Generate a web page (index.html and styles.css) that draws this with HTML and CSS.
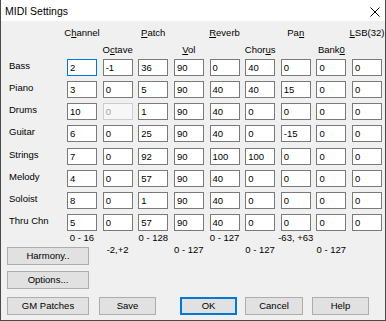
FILE: index.html
```html
<!DOCTYPE html>
<html>
<head>
<meta charset="utf-8">
<link rel="stylesheet" href="styles.css">
</head>
<body>
<div class="dialog">
  <div class="titlebar">
    <span class="title">MIDI Settings</span>
    <svg class="close" width="10" height="10" viewBox="0 0 10 10"><path d="M0.5 0.5 L9.5 9.5 M9.5 0.5 L0.5 9.5" stroke="#000" stroke-width="1" fill="none"/></svg>
  </div>
  <div class="content">
    <div class="grid hdr">
      <span class="c c2"><span>C<u>h</u>annel</span></span>
      <span class="c c4"><span><u>P</u>atch</span></span>
      <span class="c c6"><span><u>R</u>everb</span></span>
      <span class="c c8"><span>Pa<u>n</u></span></span>
      <span class="c c10"><span><u>L</u>SB(32)</span></span>
    </div>
    <div class="grid hdr hdr2">
      <span class="c c3"><span>O<u>c</u>tave</span></span>
      <span class="c c5"><span><u>V</u>ol</span></span>
      <span class="c c7"><span>Chor<u>u</u>s</span></span>
      <span class="c c9"><span>Bank<u>0</u></span></span>
    </div>
    <div class="grid rows">
      <span class="lbl">Bass</span><span class="box focus">2</span><span class="box">-1</span><span class="box">36</span><span class="box">90</span><span class="box">0</span><span class="box">40</span><span class="box">0</span><span class="box">0</span><span class="box">0</span>
      <span class="lbl">Piano</span><span class="box">3</span><span class="box">0</span><span class="box">5</span><span class="box">90</span><span class="box">40</span><span class="box">40</span><span class="box">15</span><span class="box">0</span><span class="box">0</span>
      <span class="lbl">Drums</span><span class="box">10</span><span class="box disabled">0</span><span class="box">1</span><span class="box">90</span><span class="box">40</span><span class="box">0</span><span class="box">0</span><span class="box">0</span><span class="box">0</span>
      <span class="lbl">Guitar</span><span class="box">6</span><span class="box">0</span><span class="box">25</span><span class="box">90</span><span class="box">40</span><span class="box">0</span><span class="box">-15</span><span class="box">0</span><span class="box">0</span>
      <span class="lbl">Strings</span><span class="box">7</span><span class="box">0</span><span class="box">92</span><span class="box">90</span><span class="box">100</span><span class="box">100</span><span class="box">0</span><span class="box">0</span><span class="box">0</span>
      <span class="lbl">Melody</span><span class="box">4</span><span class="box">0</span><span class="box">57</span><span class="box">90</span><span class="box">40</span><span class="box">0</span><span class="box">0</span><span class="box">0</span><span class="box">0</span>
      <span class="lbl">Soloist</span><span class="box">8</span><span class="box">0</span><span class="box">1</span><span class="box">90</span><span class="box">40</span><span class="box">0</span><span class="box">0</span><span class="box">0</span><span class="box">0</span>
      <span class="lbl">Thru Chn</span><span class="box">5</span><span class="box">0</span><span class="box">57</span><span class="box">90</span><span class="box">40</span><span class="box">0</span><span class="box">0</span><span class="box">0</span><span class="box">0</span>
    </div>
    <div class="grid hdr rangeA">
      <span class="c c2"><span>0 - 16</span></span>
      <span class="c c4"><span>0 - 128</span></span>
      <span class="c c6"><span>0 - 127</span></span>
      <span class="c c8"><span>-63, +63</span></span>
    </div>
    <div class="grid lower">
      <span class="btn side harmony">Harmony..</span>
      <span class="c c3 rb"><span>-2,+2</span></span>
      <span class="c c5 rb"><span>0 - 127</span></span>
      <span class="c c7 rb"><span>0 - 127</span></span>
      <span class="c c9 rb"><span>0 - 127</span></span>
      <span class="btn side options">Options...</span>
    </div>
  </div>
  <div class="bottombar">
    <span class="btn gm">GM Patches</span>
    <span class="btn save">Save</span>
    <span class="btn ok">OK</span>
    <span class="btn cancel">Cancel</span>
    <span class="btn help">Help</span>
  </div>
</div>
</body>
</html>
```
FILE: styles.css
```css
html, body {
  margin: 0;
  padding: 0;
  background: #f0f0f0;
}
body {
  width: 386px;
  height: 321px;
  overflow: hidden;
  font-family: "Liberation Sans", Arial, sans-serif;
  font-size: 9.5px;
  color: #000;
}
.dialog {
  box-sizing: border-box;
  width: 386px;
  height: 321px;
  background: #f0f0f0;
  border: 1px solid #4a4a4a;
  border-top: none;
  display: flex;
  flex-direction: column;
}
.titlebar {
  height: 21px;
  background: #fff;
  display: flex;
  align-items: center;
  justify-content: space-between;
  padding: 0 5px 0 4px;
}
.title {
  font-size: 10.5px;
  line-height: 12px;
  margin-top: 1px;
}
.close {
  display: block;
  margin-top: 2px;
}
.content {
  padding-left: 8px;
}
.grid {
  display: grid;
  grid-template-columns: 52.375px repeat(9, 30px);
  column-gap: 5.625px;
}
.hdr {
  height: 12px;
  line-height: 12px;
  margin-top: 6px;
}
.hdr2 {
  margin-top: 5px;
}
.c {
  display: flex;
  justify-content: center;
  white-space: nowrap;
  grid-row: 1;
}
.c2 { grid-column: 2; }
.c3 { grid-column: 3; }
.c4 { grid-column: 4; }
.c5 { grid-column: 5; }
.c6 { grid-column: 6; }
.c7 { grid-column: 7; }
.c8 { grid-column: 8; }
.c9 { grid-column: 9; }
.c10 { grid-column: 10; }
u {
  text-decoration: underline;
  text-underline-offset: 1px;
}
.rows {
  margin-top: 3px;
  grid-auto-rows: 17px;
  row-gap: 5.14px;
}
.lbl {
  align-self: start;
  line-height: 13px;
  white-space: nowrap;
}
.box {
  box-sizing: border-box;
  height: 17px;
  background: #fff;
  border: 1px solid #7a7a7a;
  padding-left: 2px;
  line-height: 15px;
}
.box.focus {
  border-color: #0078d7;
}
.box.disabled {
  border-color: #cccccc;
  background: #f7f7f7;
  color: #a0a0a0;
}
.rangeA {
  margin-top: 1px;
}
.lower {
  grid-template-rows: auto auto;
}
.rb {
  align-self: start;
  line-height: 12px;
}
.btn {
  box-sizing: border-box;
  height: 18px;
  background: #e1e1e1;
  border: 1px solid #adadad;
  display: flex;
  align-items: center;
  justify-content: center;
  white-space: nowrap;
}
.side {
  grid-column: 1 / span 2;
  justify-self: start;
  width: 82px;
  margin-left: -2px;
}
.harmony {
  grid-row: 1;
  margin-top: 3px;
}
.options {
  grid-row: 2;
  margin-top: 6px;
}
.bottombar {
  display: flex;
  padding-left: 6px;
  margin-top: 8px;
}
.gm { width: 82px; }
.save { width: 57px; margin-left: 10px; }
.ok { width: 57px; margin-left: 24px; border-color: #0078d7; box-shadow: inset 0 0 0 1px #0078d7; }
.cancel { width: 58px; margin-left: 8px; }
.help { width: 57px; margin-left: 9px; }
```
